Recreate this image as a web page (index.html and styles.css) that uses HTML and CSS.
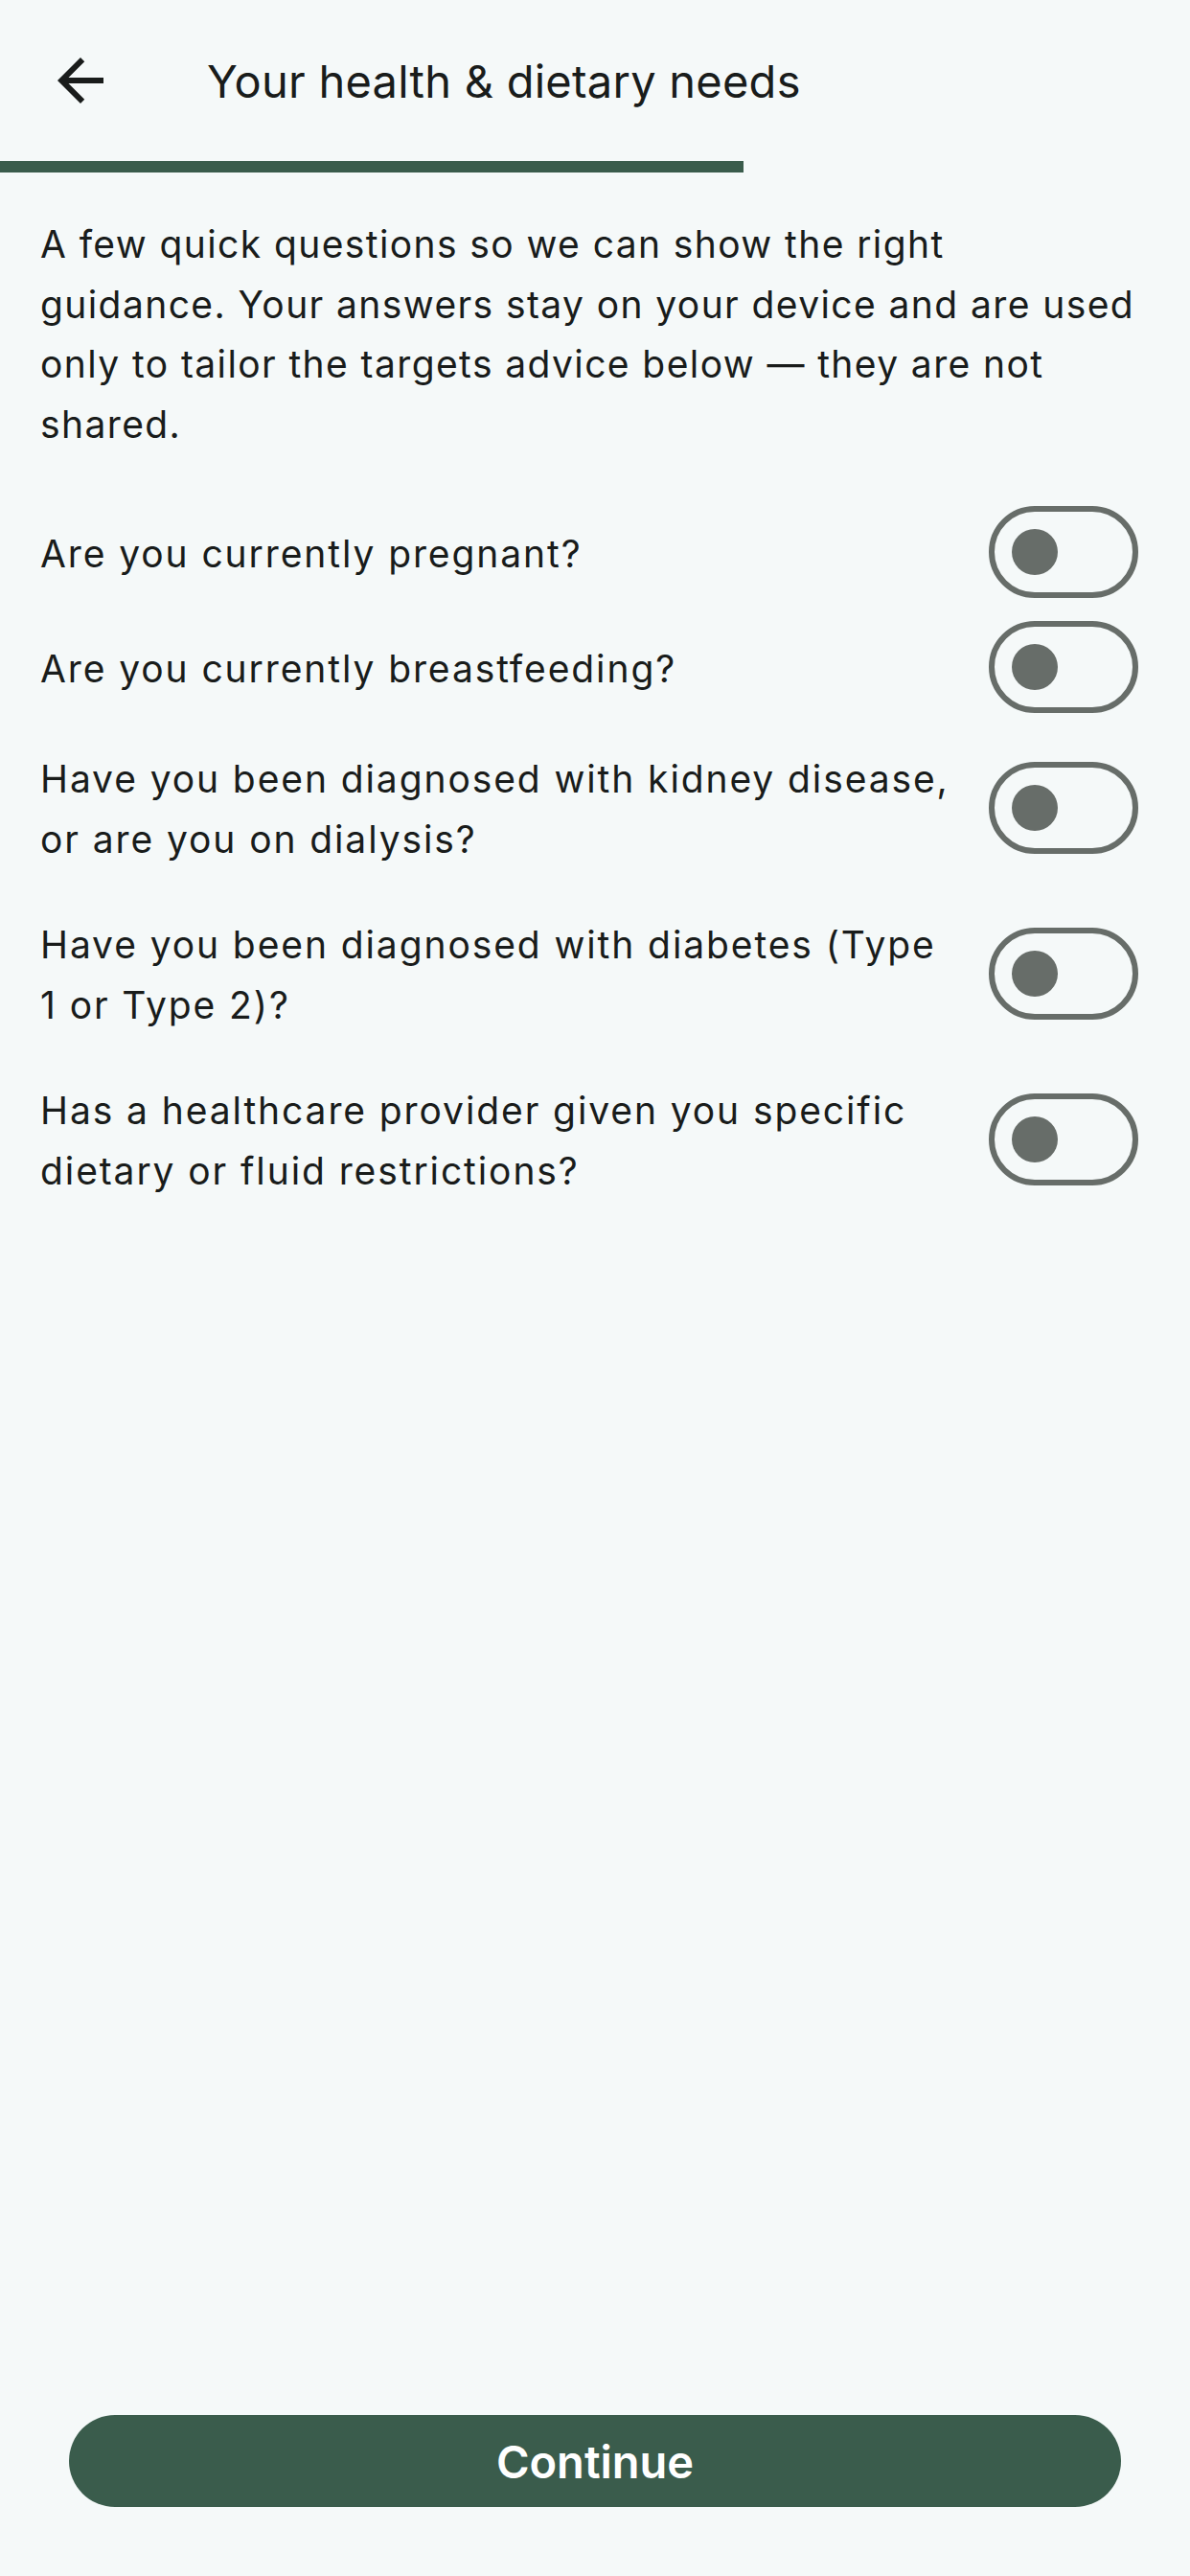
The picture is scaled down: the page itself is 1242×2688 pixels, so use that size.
FILE: index.html
```html
<!DOCTYPE html>
<html lang="en">
<head>
<meta charset="utf-8">
<title>Your health &amp; dietary needs</title>
<link rel="stylesheet" href="styles.css">
</head>
<body>
<div class="screen">
  <header class="topbar">
    <button class="nav-btn" aria-label="Back">
      <svg class="nav-icon" viewBox="0 0 24 24" width="72" height="72"><path d="M20 11H7.83l5.59-5.59L12 4l-8 8 8 8 1.41-1.41L7.83 13H20v-2z"/></svg>
    </button>
    <h1 class="title">Your health &amp; dietary needs</h1>
  </header>
  <div class="progress"><div class="progress-fill" style="width:62.5%"></div></div>

  <main class="content">
    <p class="intro">A few quick questions so we can show the right<br>guidance. Your answers stay on your device and are used only to tailor the targets advice below — they are not shared.</p>

    <ul class="questions">
      <li class="row">
        <span class="q">Are you currently pregnant?</span>
        <span class="switch"><span class="knob"></span></span>
      </li>
      <li class="row">
        <span class="q">Are you currently breastfeeding?</span>
        <span class="switch"><span class="knob"></span></span>
      </li>
      <li class="row">
        <span class="q">Have you been diagnosed with kidney disease, or are you on dialysis?</span>
        <span class="switch"><span class="knob"></span></span>
      </li>
      <li class="row">
        <span class="q">Have you been diagnosed with diabetes (Type 1 or Type 2)?</span>
        <span class="switch"><span class="knob"></span></span>
      </li>
      <li class="row">
        <span class="q">Has a healthcare provider given you specific dietary or fluid restrictions?</span>
        <span class="switch"><span class="knob"></span></span>
      </li>
    </ul>
  </main>

  <footer class="footer">
    <button class="continue">Continue</button>
  </footer>
</div>
</body>
</html>
```

FILE: styles.css
```css
* { box-sizing: border-box; }

html, body {
  margin: 0;
  padding: 0;
  background: #f5f9f9;
}

body {
  font-family: Inter, "Noto Sans", sans-serif;
  color: #191c1b;
}

.screen {
  display: flex;
  flex-direction: column;
  width: 1242px;
  height: 2688px;
}

.topbar {
  display: flex;
  align-items: center;
  height: 168px;
  padding-left: 12px;
}

.nav-btn {
  display: flex;
  align-items: center;
  justify-content: center;
  width: 144px;
  height: 144px;
  padding: 0;
  border: 0;
  background: transparent;
}

.nav-icon {
  fill: #191c1b;
}

.title {
  margin: 0 0 0 60px;
  font-size: 47px;
  font-weight: 400;
  letter-spacing: 0.25px;
  color: #191c1b;
}

.progress {
  height: 12px;
  width: 100%;
}

.progress-fill {
  height: 100%;
  background: #3a5c4c;
}

.content {
  flex: 1;
  padding: 44px 42px 0 42px;
}

.intro {
  margin: 0 0 42px 0;
  font-size: 39px;
  line-height: 62.5px;
  letter-spacing: 1.4px;
}

.questions {
  list-style: none;
  margin: 0;
  padding: 0;
}

.row {
  display: flex;
  align-items: center;
  gap: 40px;
  padding: 12px 12px 12px 0;
}

.q {
  flex: 1;
  padding: 14px 0 10px;
  font-size: 39px;
  line-height: 62.5px;
  letter-spacing: 1.9px;
}

.switch {
  flex: none;
  display: flex;
  align-items: center;
  width: 156px;
  height: 96px;
  border: 6px solid #676d69;
  border-radius: 48px;
  padding-left: 18px;
}

.knob {
  width: 48px;
  height: 48px;
  border-radius: 50%;
  background: #676d69;
}

.footer {
  padding: 0 72px 72px;
}

.continue {
  display: block;
  width: 100%;
  height: 96px;
  border: 0;
  border-radius: 48px;
  background: #3a5c4c;
  color: #ffffff;
  font-family: Inter, "Noto Sans", sans-serif;
  font-size: 47px;
  font-weight: 600;
  letter-spacing: 0;
}
```
